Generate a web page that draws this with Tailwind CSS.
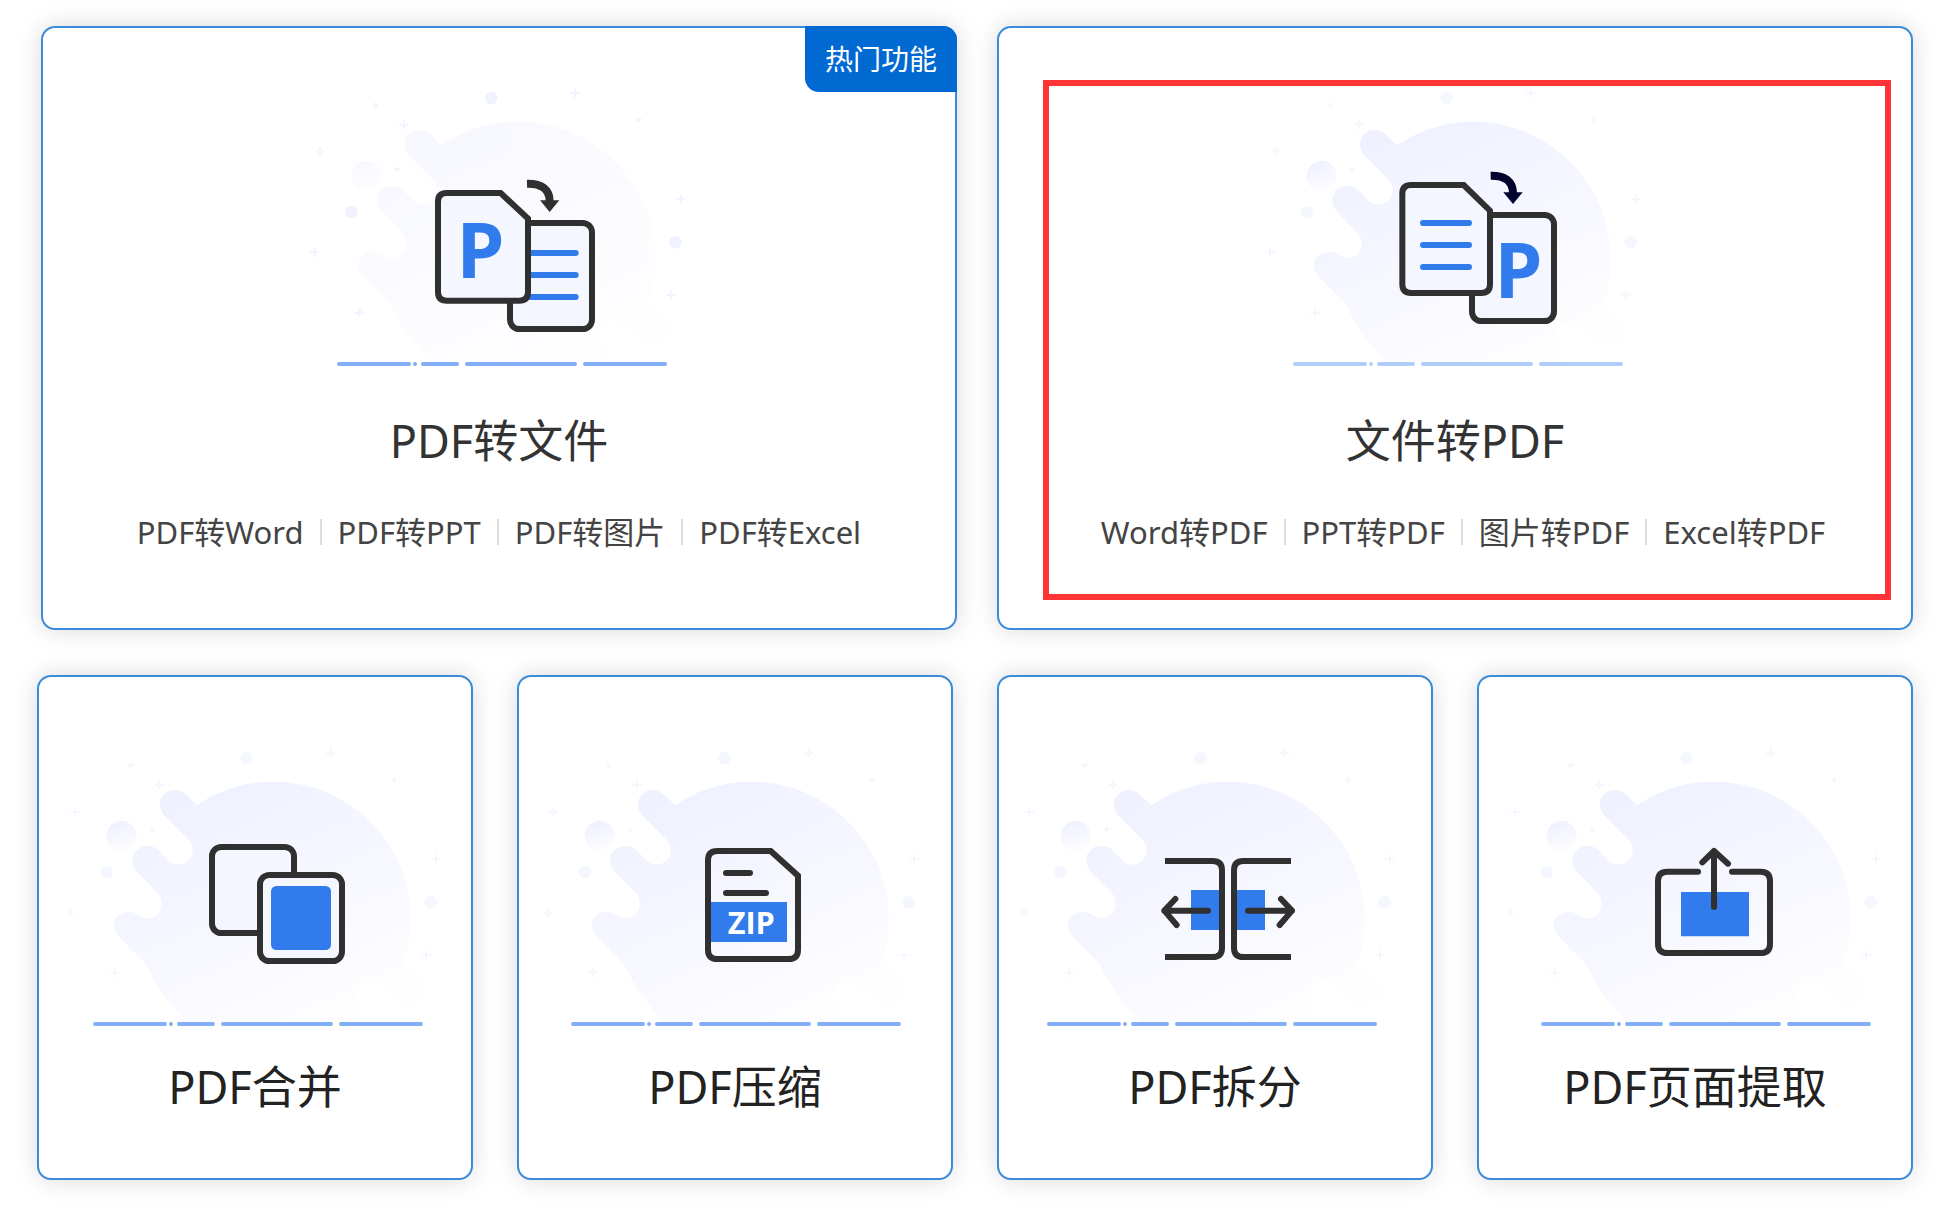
<!DOCTYPE html>
<html lang="zh-CN">
<head>
<meta charset="utf-8">
<meta name="viewport" content="width=device-width, initial-scale=1">
<title>PDF 工具</title>
<script src="https://cdn.jsdelivr.net/npm/@tailwindcss/browser@4"></script>
</head>
<body class="bg-white font-['Noto_Sans','Noto_Sans_CJK_SC',sans-serif] text-[#333]">

<!-- Shared artwork -->
<svg class="absolute size-0" aria-hidden="true">
  <defs>
    <linearGradient id="fade" gradientUnits="userSpaceOnUse" x1="440" y1="190" x2="760" y2="900">
      <stop offset="0" stop-color="#eff1ff"/>
      <stop offset="0.5" stop-color="#f6f7ff"/>
      <stop offset="1" stop-color="#fefeff"/>
    </linearGradient>
    <linearGradient id="drop" x1="0.3" y1="0" x2="0.7" y2="1">
      <stop offset="0" stop-color="#eef0ff"/>
      <stop offset="1" stop-color="#fefeff"/>
    </linearGradient>
    <symbol id="splash" overflow="visible">
      <path fill="url(#fade)" d="M408 875C352 815 318 768 288 703L208 622C170 578 204 546 236 546C262 546 272 565 295 565C334 562 347 515 323 488L260 425C228 384 260 348 291 348C311 348 322 356 333 368C350 385 362 404 386 404C424 402 440 360 419 333L344 257C312 220 340 180 373 180C392 180 404 189 412 197L441 226C500 185 580 155 668 155A412 412 0 0 1 1060 700Q1030 765 1000 770C950 735 905 770 918 810L940 875Z"/>
      <path fill="#fefeff" d="M1058 700L1115 755C1148 790 1110 830 1060 825L1000 770Z"/>
      <circle cx="215" cy="318" r="45" fill="url(#drop)"/>
    </symbol>
    <symbol id="stars" overflow="visible">
      <g fill="currentColor" stroke="none">
        <circle cx="589" cy="84" r="19"/><circle cx="170" cy="426" r="19"/><circle cx="1142" cy="517" r="19"/>
      </g>
      <path stroke="currentColor" stroke-width="6" fill="none" d="M842 55v28M828 69h28M327 150v28M313 164h28M76 231v28M62 245h28M60 533v28M46 547h28M195 714v28M181 728h28M1158 373v28M1144 387h28M1128 661v28M1114 675h28M242 98v16M234 106h16M1032 140v18M1023 149h18M307 290v16M299 298h16"/>
    </symbol>
    <symbol id="ground" overflow="visible">
      <path stroke="currentColor" stroke-width="12" stroke-linecap="round" d="M135 882H345M363 882H363M387 882H489M519 882H843M873 882H1113"/>
    </symbol>
  </defs>
</svg>

<main class="flex flex-col gap-[45px] pt-[26px] pr-[23px] pb-9">

  <section class="grid grid-cols-2 gap-10 pl-[41px]">

    <article class="relative flex flex-col items-center rounded-[14px] border-2 border-[#3a8bdc] bg-white pt-[42px] pb-[76px] shadow-[0_0_24px_rgba(0,0,0,0.15)]">
      <span class="absolute -top-0.5 -right-0.5 rounded-tr-[14px] rounded-bl-[14px] bg-[#0069d2] px-5 py-[13px] text-[28px] leading-10 text-white">热门功能</span>
      <svg class="h-[310px] w-[420px]" viewBox="-3 0 1260 930" fill="none" aria-hidden="true">
        <use href="#splash" x="14" opacity="0.45"/>
        <use href="#stars" x="14" class="text-[#f1f2ff]"/>
        <use href="#ground" x="12" class="text-[#82aef6]"/>
        <g stroke="#303030" stroke-width="18">
          <rect x="660" y="459" width="246" height="318" rx="28" fill="#f4f7ff"/>
          <path stroke="#327bed" stroke-linecap="round" d="M700 549H857M700 615H857M700 681H857"/>
          <path fill="#f4f7ff" d="M470 369H632L714 446V666Q714 692 688 692H470Q444 692 444 666V395Q444 369 470 369Z"/>
          <path stroke-width="24" d="M711 341C755 340 779 358 779 394"/>
        </g>
        <path fill="#303030" d="M750 391H808L779 426Z"/>
        <text x="499" y="625" fill="#327bed" font-size="231" class="font-['Open_Sans',sans-serif] font-bold">P</text>
      </svg>
      <h2 class="mt-[31px] text-[45px] leading-[60px]">PDF转文件</h2>
      <nav class="mt-[41px] flex items-center gap-4 text-[31px] leading-10 text-[#444]">
        <a href="#">PDF转Word</a>
        <span class="h-[26px] w-0.5 bg-[#dcdcdc]"></span>
        <a href="#">PDF转PPT</a>
        <span class="h-[26px] w-0.5 bg-[#dcdcdc]"></span>
        <a href="#">PDF转图片</a>
        <span class="h-[26px] w-0.5 bg-[#dcdcdc]"></span>
        <a href="#">PDF转Excel</a>
      </nav>
    </article>

    <article class="relative flex flex-col items-center rounded-[14px] border-2 border-[#3a8bdc] bg-white pt-[42px] pb-[76px] shadow-[0_0_24px_rgba(0,0,0,0.15)]">
      <div class="pointer-events-none absolute top-[52px] right-5 bottom-7 left-11 border-[6px] border-[#ff3434]"></div>
      <svg class="h-[310px] w-[420px]" viewBox="-15 0 1260 930" fill="none" aria-hidden="true">
        <use href="#splash"/>
        <use href="#stars" class="text-[#f5f7ff]"/>
        <use href="#ground" class="text-[#b2cdf9]"/>
        <g stroke="#303030" stroke-width="18">
          <rect x="666" y="435" width="246" height="318" rx="28" fill="#f4f7ff"/>
          <path fill="#f4f7ff" d="M483 345H641L720 422V643Q720 669 694 669H483Q457 669 457 643V371Q457 345 483 345Z"/>
          <path stroke="#327bed" stroke-linecap="round" d="M519 459H657M519 525H657M519 591H657"/>
          <path stroke="#02022e" stroke-width="24" d="M722 317C765 316 789 334 789 370"/>
        </g>
        <path fill="#02022e" d="M760 367H818L789 402Z"/>
        <text x="733" y="685" fill="#327bed" font-size="231" class="font-['Open_Sans',sans-serif] font-bold">P</text>
      </svg>
      <h2 class="mt-[31px] text-[45px] leading-[60px]">文件转PDF</h2>
      <nav class="mt-[41px] flex items-center gap-4 pl-4 text-[31px] leading-10 text-[#444]">
        <a href="#">Word转PDF</a>
        <span class="h-[26px] w-0.5 bg-[#dcdcdc]"></span>
        <a href="#">PPT转PDF</a>
        <span class="h-[26px] w-0.5 bg-[#dcdcdc]"></span>
        <a href="#">图片转PDF</a>
        <span class="h-[26px] w-0.5 bg-[#dcdcdc]"></span>
        <a href="#">Excel转PDF</a>
      </nav>
    </article>
  </section>

  <section class="grid grid-cols-4 gap-11 pl-[37px] text-[#222]">

    <a href="#" class="flex flex-col items-center rounded-[14px] border-2 border-[#3a8bdc] bg-white pt-[53px] pb-[61px] shadow-[0_0_24px_rgba(0,0,0,0.15)]">
      <svg class="h-[310px] w-[420px]" viewBox="-15 0 1260 930" fill="none" aria-hidden="true">
        <use href="#splash"/>
        <use href="#stars" class="text-[#f5f7ff]"/>
        <use href="#ground" class="text-[#82aef6]"/>
        <g transform="translate(-60 -180)" stroke="#303030" stroke-width="18">
          <rect x="546" y="531" width="246" height="258" rx="28" fill="#f4f7ff"/>
          <rect x="690" y="615" width="246" height="258" rx="28" fill="#f4f7ff"/>
          <rect x="723" y="648" width="180" height="192" rx="16" fill="#327bed" stroke="none"/>
        </g>
      </svg>
      <h2 class="mt-[17px] text-[45px] leading-[60px]">PDF合并</h2>
    </a>

    <a href="#" class="flex flex-col items-center rounded-[14px] border-2 border-[#3a8bdc] bg-white pt-[53px] pb-[61px] shadow-[0_0_24px_rgba(0,0,0,0.15)]">
      <svg class="h-[310px] w-[420px]" viewBox="-9 0 1260 930" fill="none" aria-hidden="true">
        <use href="#splash"/>
        <use href="#stars" class="text-[#f5f7ff]"/>
        <use href="#ground" class="text-[#82aef6]"/>
        <g transform="translate(-54 -180)" stroke="#303030" stroke-width="18">
          <path fill="#327bed" stroke="none" d="M600 696H831V816H600Z"/>
          <path d="M622 543H782L864 617V839Q864 867 836 867H622Q594 867 594 839V571Q594 543 622 543Z"/>
          <path stroke-linecap="round" d="M648 609H720M648 669H768"/>
          <text x="653" y="792" fill="#fff" stroke="none" font-size="92" class="font-['Open_Sans',sans-serif] font-bold">ZIP</text>
        </g>
      </svg>
      <h2 class="mt-[17px] text-[45px] leading-[60px]">PDF压缩</h2>
    </a>

    <a href="#" class="flex flex-col items-center rounded-[14px] border-2 border-[#3a8bdc] bg-white pt-[53px] pb-[61px] shadow-[0_0_24px_rgba(0,0,0,0.15)]">
      <svg class="h-[310px] w-[420px]" viewBox="3 0 1260 930" fill="none" aria-hidden="true">
        <use href="#splash"/>
        <use href="#stars" class="text-[#f5f7ff]"/>
        <use href="#ground" class="text-[#82aef6]"/>
        <g transform="translate(-42 -180)" stroke="#303030" stroke-width="18">
          <path fill="#327bed" stroke="none" d="M603 660H696V780H603ZM732 660H825V780H732Z"/>
          <path d="M525 573H668Q696 573 696 601V833Q696 861 668 861H525M903 573H760Q732 573 732 601V833Q732 861 760 861H903"/>
          <path stroke-linecap="round" stroke-linejoin="round" d="M654 722H523M556 687L523 722L560 765M774 722H906M873 687L906 722L869 765"/>
        </g>
      </svg>
      <h2 class="mt-[17px] text-[45px] leading-[60px]">PDF拆分</h2>
    </a>

    <a href="#" class="flex flex-col items-center rounded-[14px] border-2 border-[#3a8bdc] bg-white pt-[53px] pb-[61px] shadow-[0_0_24px_rgba(0,0,0,0.15)]">
      <svg class="h-[310px] w-[420px]" viewBox="-15 0 1260 930" fill="none" aria-hidden="true">
        <use href="#splash"/>
        <use href="#stars" class="text-[#f5f7ff]"/>
        <use href="#ground" x="24" class="text-[#82aef6]"/>
        <g transform="translate(-60 -180)" stroke="#303030" stroke-width="18" stroke-linecap="round" stroke-linejoin="round">
          <path fill="#327bed" stroke="none" d="M633 666H837V799H633Z"/>
          <path d="M684 605H592Q564 605 564 633V821Q564 849 592 849H872Q900 849 900 821V633Q900 605 872 605H786"/>
          <path d="M732 711V543M697 577L732 543L774 581"/>
        </g>
      </svg>
      <h2 class="mt-[17px] text-[45px] leading-[60px]">PDF页面提取</h2>
    </a>
  </section>
</main>
</body>
</html>
